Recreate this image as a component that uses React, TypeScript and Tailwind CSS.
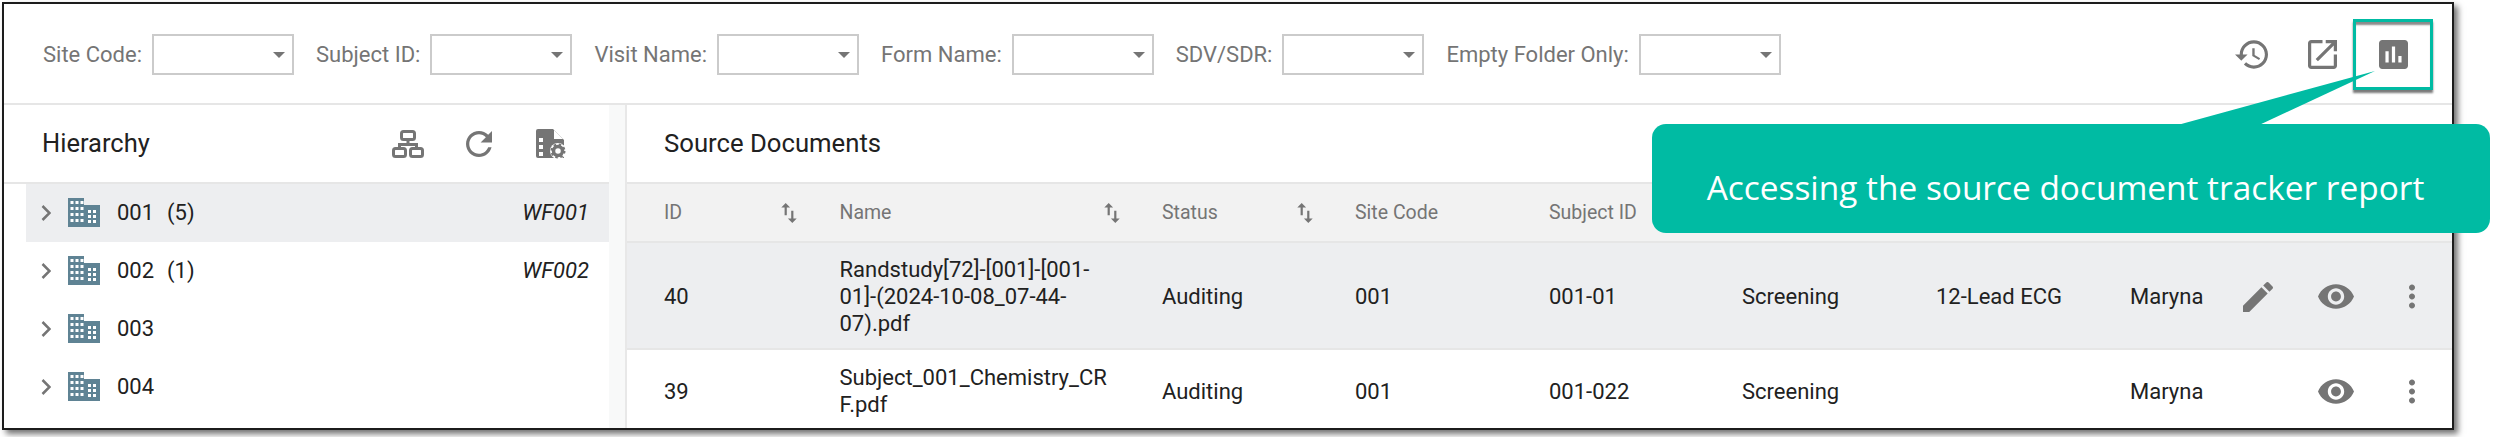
import React from 'react';

const filters = ['Site Code:', 'Subject ID:', 'Visit Name:', 'Form Name:', 'SDV/SDR:', 'Empty Folder Only:'];

const sites = [
  { code: '001', count: '(5)', wf: 'WF001', active: true },
  { code: '002', count: '(1)', wf: 'WF002', active: false },
  { code: '003', count: '', wf: '', active: false },
  { code: '004', count: '', wf: '', active: false },
];

const docs = [
  {
    id: '40',
    name: ['Randstudy[72]-[001]-[001-', '01]-(2024-10-08_07-44-', '07).pdf'],
    subject: '001-01',
    form: '12-Lead ECG',
    editable: true,
  },
  {
    id: '39',
    name: ['Subject_001_Chemistry_CR', 'F.pdf'],
    subject: '001-022',
    form: '',
    editable: false,
  },
];

const gridCols = 'grid grid-cols-[175.5px_322.5px_193px_194px_193px_194px_194px_113px_1fr] pl-[37px] items-center';

const Icon: React.FC<{ d: string; box: string; className: string }> = ({ d, box, className }) => (
  <svg viewBox={box} className={className} fill="#757575">
    <path d={d} />
  </svg>
);

const SortIcon = () => (
  <Icon box="4 2 16 20" className="w-[18px] h-[22px]" d="M9 3L5 7h3v7h2V7h3L9 3zm7 14v-7h-2v7h-3l4 4 4-4h-3z" />
);

const Building = () => (
  <svg viewBox="0 0 32 29" className="w-[32px] h-[29px] shrink-0">
    <path d="M0 0h16v7h16v22H0z" fill="#5f8394" />
    {[3, 9, 15, 21].map((y) =>
      [2.5, 7.5, 12.5].map((x) => <rect key={`${x}-${y}`} x={x} y={y} width="3" height="3" fill="#fff" />)
    )}
    {[12, 17, 22].map((y) =>
      [20, 25].map((x) => <rect key={`${x}-${y}`} x={x} y={y} width="3" height="3" fill="#fff" />)
    )}
  </svg>
);

export default function App() {
  return (
    <div className="relative w-[2500px] h-[437px] bg-white overflow-hidden font-['Roboto',sans-serif]">
      <div className="ml-[2px] mt-[2px] w-[2452px] h-[428px] border-2 border-[#1c1c1c] shadow-[4px_4px_6px_rgba(0,0,0,0.55)] bg-white flex flex-col">
        {/* filter bar */}
        <div className="h-[101px] shrink-0 border-b-2 border-[#e6e6e6] flex items-center pt-[2px] pl-[39px]">
          {filters.map((label) => (
            <div key={label} className="flex items-center mr-[22px]">
              <span className="text-[22px] text-[#757575] mr-[10px] whitespace-nowrap">{label}</span>
              <div className="w-[142px] h-[41px] border-2 border-[#cbcbcb] flex items-center justify-end pr-[7px]">
                <svg viewBox="0 0 12 6" className="w-[12px] h-[6px]">
                  <path d="M0 0h12L6 6z" fill="#757575" />
                </svg>
              </div>
            </div>
          ))}
          <div className="ml-auto flex items-center pr-[44px]">
            <Icon
              box="1 3 21 18"
              className="w-[33px] h-[29px] mr-[40px]"
              d="M13 3c-4.97 0-9 4.03-9 9H1l3.89 3.89.07.14L9 12H6c0-3.87 3.13-7 7-7s7 3.13 7 7-3.13 7-7 7c-1.93 0-3.68-.79-4.94-2.06l-1.42 1.42C8.27 19.99 10.51 21 13 21c4.97 0 9-4.03 9-9s-4.03-9-9-9zm-1 5v5l4.28 2.54.72-1.21-3.5-2.08V8H12z"
            />
            <Icon
              box="3 3 18 18"
              className="w-[29px] h-[29px] mr-[42px]"
              d="M19 19H5V5h7V3H5c-1.11 0-2 .9-2 2v14c0 1.1.89 2 2 2h14c1.1 0 2-.9 2-2v-7h-2v7zM14 3v2h3.59l-9.83 9.83 1.41 1.41L19 6.41V10h2V3h-7z"
            />
            <Icon
              box="3 3 18 18"
              className="w-[29px] h-[29px]"
              d="M19 3H5c-1.1 0-2 .9-2 2v14c0 1.1.9 2 2 2h14c1.1 0 2-.9 2-2V5c0-1.1-.9-2-2-2zM9 17H7v-7h2v7zm4 0h-2V7h2v10zm4 0h-2v-4h2v4z"
            />
          </div>
        </div>

        <div className="flex flex-1 min-h-0">
          {/* hierarchy */}
          <div className="w-[605px] shrink-0 overflow-hidden">
            <div className="h-[79px] border-b-2 border-[#e6e6e6] flex items-center pl-[38px] pr-[43px]">
              <span className="text-[25.5px] text-[#212121]">Hierarchy</span>
              <div className="ml-auto flex items-center">
                <svg viewBox="0 0 32 28" className="w-[32px] h-[28px] mr-[42px]" fill="none" stroke="#757575" strokeWidth="3">
                  <rect x="9.5" y="1.5" width="13" height="8" rx="2" />
                  <rect x="1.5" y="18.5" width="12" height="8" rx="2" />
                  <rect x="18.5" y="18.5" width="12" height="8" rx="2" />
                  <path d="M16 10v4.5M7.5 18v-3.5h17V18" />
                </svg>
                <Icon
                  box="4 4 16 16"
                  className="w-[26px] h-[26px] mr-[44px]"
                  d="M17.65 6.35C16.2 4.9 14.21 4 12 4c-4.42 0-7.99 3.58-7.99 8s3.57 8 7.99 8c3.73 0 6.84-2.55 7.73-6h-2.08c-.82 2.33-3.04 4-5.65 4-3.31 0-6-2.69-6-6s2.69-6 6-6c1.66 0 3.14.69 4.22 1.78L13 11h7V4l-2.35 2.35z"
                />
                <svg viewBox="0 0 30 30" className="w-[30px] h-[30px]">
                  <path d="M2 0h15l11 11v18H2a2 2 0 0 1-2-2V2a2 2 0 0 1 2-2z" fill="#757575" />
                  <path d="M18 1l9 9h-9z" fill="#fff" />
                  <rect x="3" y="9" width="4" height="4" fill="#fff" />
                  <rect x="3" y="16" width="4" height="4" fill="#fff" />
                  <rect x="3" y="23" width="4" height="4" fill="#fff" />
                  <circle cx="22" cy="22" r="8" fill="#fff" />
                  <circle cx="22" cy="22" r="4.5" fill="none" stroke="#757575" strokeWidth="3.5" />
                  <circle cx="22" cy="22" r="6.5" fill="none" stroke="#757575" strokeWidth="2" strokeDasharray="2.5 2.6" />
                </svg>
              </div>
            </div>
            <div className="pl-[22px]">
              {sites.map((s) => (
                <div
                  key={s.code}
                  className={`h-[58px] flex items-center pl-[15px] pr-[20px] pb-[1px] text-[22px] text-[#212121] ${s.active ? 'bg-[#edeef0]' : ''}`}
                >
                  <svg viewBox="0 0 10 16" className="w-[10px] h-[16px] mr-[17px] shrink-0" fill="none" stroke="#757575" strokeWidth="2.5">
                    <path d="M1.5 1l7 7-7 7" />
                  </svg>
                  <Building />
                  <span className="ml-[17px] w-[50px]">{s.code}</span>
                  <span>{s.count}</span>
                  <span className="ml-auto italic">{s.wf}</span>
                </div>
              ))}
            </div>
          </div>

          <div className="w-[16px] shrink-0 bg-[#f8f9f9]" />

          {/* source documents */}
          <div className="flex-1 min-w-0 border-l-2 border-[#e8e8e8] overflow-hidden">
            <div className="h-[79px] border-b-2 border-[#e6e6e6] flex items-center pl-[37px]">
              <span className="text-[25.7px] text-[#212121]">Source Documents</span>
            </div>
            <div className={`${gridCols} h-[59px] bg-[#f2f2f2] border-b-2 border-[#e6e6e6] text-[19.5px] text-[#757575]`}>
              <div className="flex items-center">
                <span className="w-[116px]">ID</span>
                <SortIcon />
              </div>
              <div className="flex items-center">
                <span className="w-[263px]">Name</span>
                <SortIcon />
              </div>
              <div className="flex items-center">
                <span className="w-[134px]">Status</span>
                <SortIcon />
              </div>
              <span>Site Code</span>
              <span>Subject ID</span>
            </div>
            {docs.map((d) => (
              <div
                key={d.id}
                className={`${gridCols} text-[22px] text-[#212121] ${d.editable ? 'h-[107px] pt-[2px] bg-[#edeef0] border-b-2 border-[#e6e6e6]' : 'h-[82px]'}`}
              >
                <span>{d.id}</span>
                <div className="leading-[27px]">
                  {d.name.map((line) => (
                    <div key={line}>{line}</div>
                  ))}
                </div>
                <span>Auditing</span>
                <span>001</span>
                <span>{d.subject}</span>
                <span>Screening</span>
                <span>{d.form}</span>
                <span>Maryna</span>
                <div className="flex items-center">
                  <div className="w-[30px] mr-[45px]">
                    {d.editable && (
                      <Icon
                        box="3 3 18 18"
                        className="w-[30px] h-[30px]"
                        d="M3 17.25V21h3.75L17.81 9.94l-3.75-3.75L3 17.25zM20.71 7.04c.39-.39.39-1.02 0-1.41l-2.34-2.34c-.39-.39-1.02-.39-1.41 0l-1.83 1.83 3.75 3.75 1.83-1.83z"
                      />
                    )}
                  </div>
                  <Icon
                    box="1 4.5 22 15"
                    className="w-[36px] h-[25px] mr-[55px]"
                    d="M12 4.5C7 4.5 2.73 7.61 1 12c1.73 4.39 6 7.5 11 7.5s9.27-3.11 11-7.5c-1.73-4.39-6-7.5-11-7.5zM12 17c-2.76 0-5-2.24-5-5s2.24-5 5-5 5 2.24 5 5-2.24 5-5 5zm0-8c-1.66 0-3 1.34-3 3s1.34 3 3 3 3-1.34 3-3-1.34-3-3-3z"
                  />
                  <Icon
                    box="10 4 4 16"
                    className="w-[6px] h-[25px]"
                    d="M12 8c1.1 0 2-.9 2-2s-.9-2-2-2-2 .9-2 2 .9 2 2 2zm0 2c-1.1 0-2 .9-2 2s.9 2 2 2 2-.9 2-2-.9-2-2-2zm0 6c-1.1 0-2 .9-2 2s.9 2 2 2 2-.9 2-2-.9-2-2-2z"
                  />
                </div>
              </div>
            ))}
          </div>
        </div>
      </div>

      {/* annotation over the screenshot */}
      <div className="absolute left-[2353px] top-[19px] w-[80px] h-[71px] border-[3px] border-[#00bba3] shadow-[0_3px_2px_#7a7a7a,inset_0_4px_2px_-1px_#8a8a8a]" />
      <svg viewBox="0 0 210 60" className="absolute left-[2170px] top-[68px] w-[210px] h-[60px]">
        <polygon points="205,3 4,58 87,58" fill="#00bba3" />
      </svg>
      <div className="absolute left-[1652px] top-[124px] w-[838px] h-[109px] rounded-[14px] bg-[#00bba3] flex items-center justify-center pt-[18px] pr-[11px] font-['Open_Sans',sans-serif] text-[33.4px] text-white whitespace-nowrap">
        Accessing the source document tracker report
      </div>
    </div>
  );
}
